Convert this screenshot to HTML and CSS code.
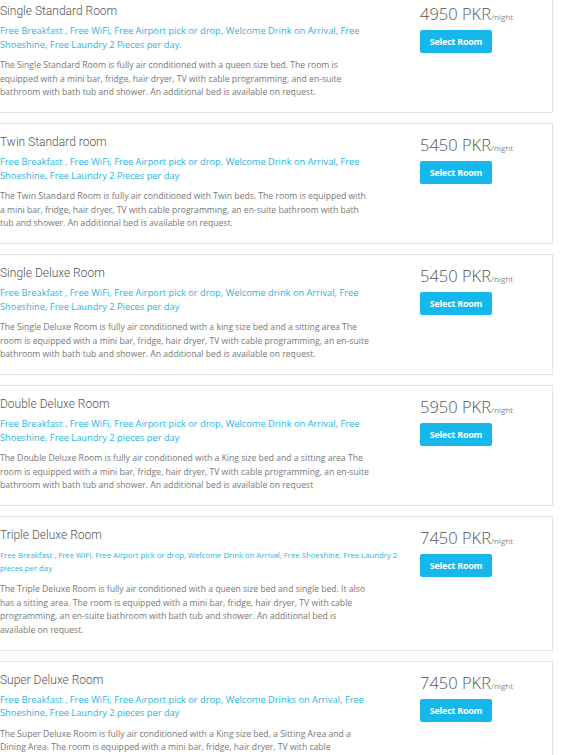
FILE: index.html
```html
<!DOCTYPE html>
<html>
<head>
<meta charset="utf-8">
<link rel="stylesheet" href="styles.css">
</head>
<body>
<div class="rooms">
  <div class="room room-first">
    <div class="info">
      <h3 class="title">Single Standard Room</h3>
      <p class="amen">Free Breakfast , Free WiFi, Free Airport pick or drop, Welcome Drink on Arrival, Free<br>Shoeshine, Free Laundry 2 Pieces per day.</p>
      <p class="desc">The Single Standard Room is fully air conditioned with a queen size bed. The room is<br>equipped with a mini bar, fridge, hair dryer, TV with cable programming, and en-suite<br>bathroom with bath tub and shower. An additional bed is available on request.</p>
    </div>
    <div class="book">
      <div class="price">4950 PKR<span class="per">/night</span></div>
      <button class="select">Select Room</button>
    </div>
  </div>

  <div class="room">
    <div class="info">
      <h3 class="title">Twin Standard room</h3>
      <p class="amen">Free Breakfast , Free WiFi, Free Airport pick or drop, Welcome Drink on Arrival, Free<br>Shoeshine, Free Laundry 2 Pieces per day</p>
      <p class="desc">The Twin Standard Room is fully air conditioned with Twin beds. The room is equipped with<br>a mini bar, fridge, hair dryer, TV with cable programming, an en-suite bathroom with bath<br>tub and shower. An additional bed is available on request.</p>
    </div>
    <div class="book">
      <div class="price">5450 PKR<span class="per">/night</span></div>
      <button class="select">Select Room</button>
    </div>
  </div>

  <div class="room">
    <div class="info">
      <h3 class="title">Single Deluxe Room</h3>
      <p class="amen">Free Breakfast , Free WiFi, Free Airport pick or drop, Welcome drink on Arrival, Free<br>Shoeshine, Free Laundry 2 Pieces per day</p>
      <p class="desc">The Single Deluxe Room is fully air conditioned with a king size bed and a sitting area The<br>room is equipped with a mini bar, fridge, hair dryer, TV with cable programming, an en-suite<br>bathroom with bath tub and shower. An additional bed is available on request.</p>
    </div>
    <div class="book">
      <div class="price">5450 PKR<span class="per">/night</span></div>
      <button class="select">Select Room</button>
    </div>
  </div>

  <div class="room">
    <div class="info">
      <h3 class="title">Double Deluxe Room</h3>
      <p class="amen">Free Breakfast , Free WiFi, Free Airport pick or drop, Welcome Drink on Arrival, Free<br>Shoeshine, Free Laundry 2 pieces per day</p>
      <p class="desc">The Double Deluxe Room is fully air conditioned with a King size bed and a sitting area The<br>room is equipped with a mini bar, fridge, hair dryer, TV with cable programming, an en-suite<br>bathroom with bath tub and shower. An additional bed is available on request</p>
    </div>
    <div class="book">
      <div class="price">5950 PKR<span class="per">/night</span></div>
      <button class="select">Select Room</button>
    </div>
  </div>

  <div class="room">
    <div class="info">
      <h3 class="title">Triple Deluxe Room</h3>
      <p class="amen amen-small">Free Breakfast , Free WiFi, Free Airport pick or drop, Welcome Drink on Arrival, Free Shoeshine, Free Laundry 2<br>pieces per day</p>
      <p class="desc">The Triple Deluxe Room is fully air conditioned with a queen size bed and single bed. It also<br>has a sitting area. The room is equipped with a mini bar, fridge, hair dryer, TV with cable<br>programming, an en-suite bathroom with bath tub and shower. An additional bed is<br>available on request.</p>
    </div>
    <div class="book">
      <div class="price">7450 PKR<span class="per">/night</span></div>
      <button class="select">Select Room</button>
    </div>
  </div>

  <div class="room">
    <div class="info">
      <h3 class="title">Super Deluxe Room</h3>
      <p class="amen">Free Breakfast , Free WiFi, Free Airport pick or drop, Welcome Drinks on Arrival, Free<br>Shoeshine, Free Laundry 2 pieces per day</p>
      <p class="desc">The Super Deluxe Room is fully air conditioned with a King size bed, a Sitting Area and a<br>Dining Area. The room is equipped with a mini bar, fridge, hair dryer, TV with cable<br>programming, an en-suite bathroom with bath tub and shower. An additional bed is<br>available on request.</p>
    </div>
    <div class="book">
      <div class="price">7450 PKR<span class="per">/night</span></div>
      <button class="select">Select Room</button>
    </div>
  </div>
</div>
</body>
</html>
```

FILE: styles.css
```css
html, body {
  margin: 0;
  padding: 0;
  background: #ffffff;
  overflow: hidden;
}

body {
  font-family: "Open Sans", "Liberation Sans", sans-serif;
  color: #777;
}

.rooms {
  margin-left: -11px;
  margin-top: -8px;
  width: 564px;
  display: flex;
  flex-direction: column;
  gap: 10px;
}

.room {
  border: 1px solid #e3e3e3;
  padding: 10px 10px 12.5px 10px;
  display: grid;
  grid-template-columns: 410px 1fr;
  column-gap: 10px;
  background: #fff;
}

.info {
  min-width: 0;
}

.title {
  margin: 0;
  font-family: Roboto, "Noto Sans", sans-serif;
  font-weight: 300;
  font-size: 12px;
  line-height: 16px;
  color: #555;
  white-space: nowrap;
}

.amen {
  margin: 5px 0 0 0;
  font-size: 9.3px;
  line-height: 13.5px;
  color: #2ab4e0;
  white-space: nowrap;
}

.amen-small {
  font-size: 7.75px;
  line-height: 13px;
  margin-top: 6px;
}

.desc {
  margin: 8px 0 0 0;
  font-size: 8.65px;
  line-height: 13.5px;
  color: #787878;
  white-space: nowrap;
}

.book {
  padding-top: 1px;
}

.price {
  font-size: 16.5px;
  font-weight: 300;
  line-height: 20px;
  color: #555;
  white-space: nowrap;
}

.per {
  font-size: 8px;
  color: #8a8a8a;
  font-weight: 400;
}

.select {
  display: block;
  margin-top: 3px;
  width: 72px;
  height: 23px;
  padding: 0;
  border: none;
  border-radius: 2px;
  background: #16b8ec;
  color: #fff;
  font-family: "Open Sans", "Liberation Sans", sans-serif;
  font-weight: 700;
  font-size: 9px;
  letter-spacing: -0.25px;
  cursor: pointer;
}
```
